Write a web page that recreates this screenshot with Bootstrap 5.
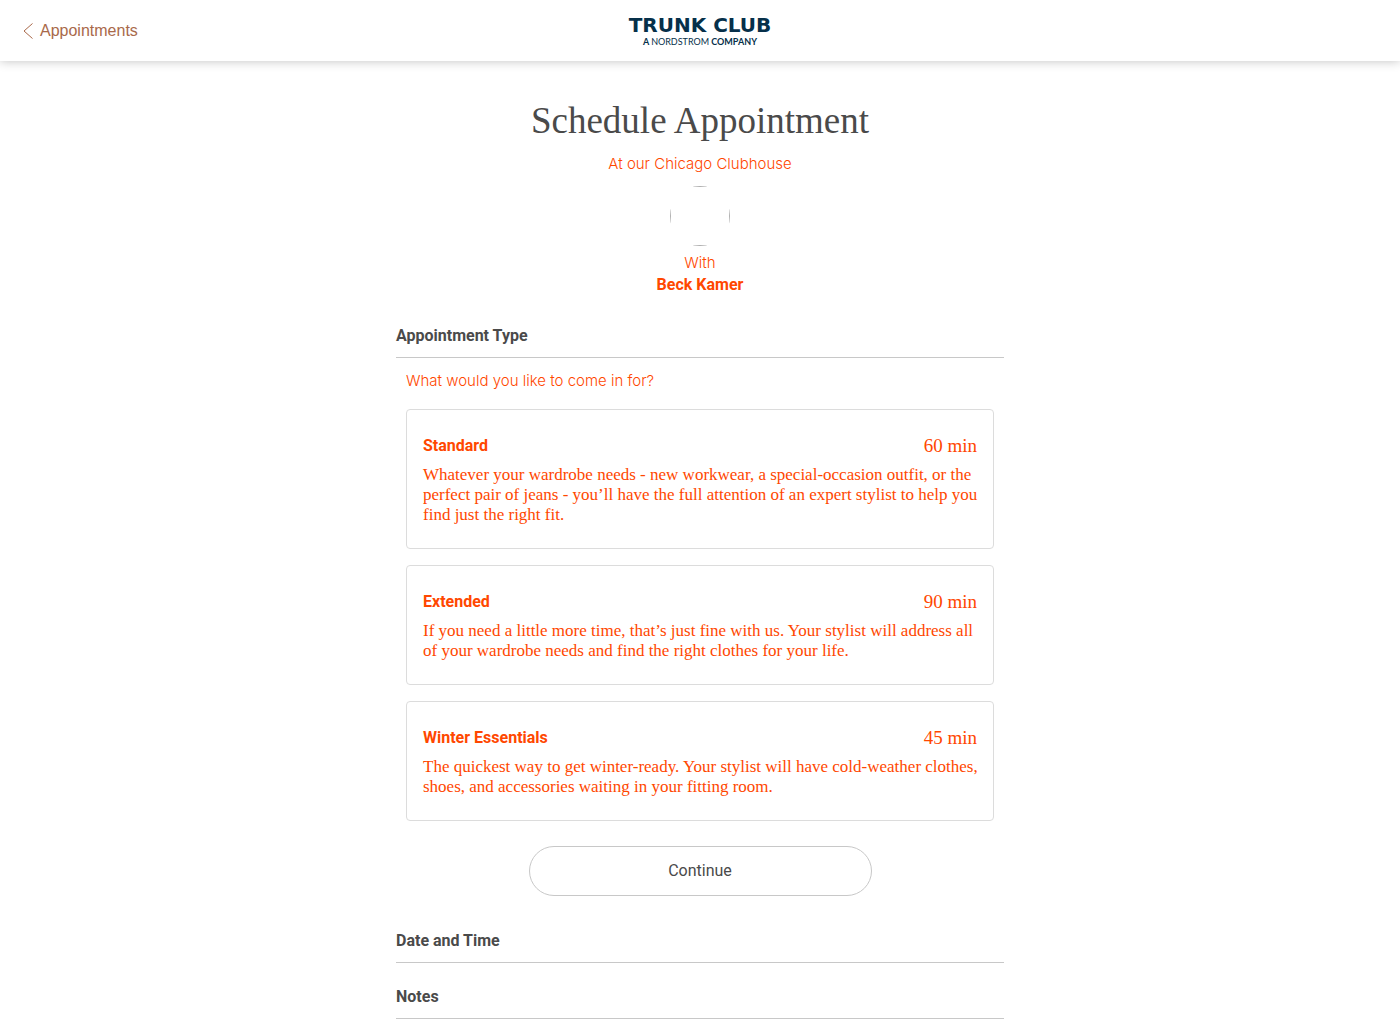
<!DOCTYPE html>
<html lang="en">
<head>
<meta charset="utf-8">
<meta name="viewport" content="width=device-width, initial-scale=1">
<title>Schedule Appointment - Trunk Club</title>
<link href="https://cdn.jsdelivr.net/npm/bootstrap@5.3.0/dist/css/bootstrap.min.css" rel="stylesheet">
<style>
  :root { --tc-orange: #ff4700; --tc-ink: #4a4a4a; --tc-navy: #06304a; --tc-copper: #a9694a; --tc-line: #c8c8c8; }
  body { font-family: Roboto, "Liberation Sans", sans-serif; font-size: 16px; line-height: 22px; color: var(--tc-orange); }
  .topbar { height: 61px; box-shadow: 0 0 10px rgba(0, 0, 0, .25); }
  .back-link { font-family: "Liberation Sans", sans-serif; color: var(--tc-copper); }
  .brand { color: var(--tc-navy); }
  .brand-name { font-family: "DejaVu Sans", sans-serif; font-weight: 700; font-size: 20px; line-height: 22px; }
  .brand-tag { font-family: Lato, sans-serif; font-weight: 700; font-size: 9px; line-height: 12px; }
  .brand-parent { font-weight: 400; }
  .booking { max-width: 608px; }
  .page-title { font-family: "Liberation Serif", serif; font-size: 37px; line-height: 40px; font-weight: 400; color: var(--tc-ink); }
  .soft-text { font-family: Inter, sans-serif; font-weight: 300; font-size: 15px; }
  .avatar { width: 60px; height: 60px; overflow: hidden; margin: 11px auto 6px; }
  .avatar-frame { border: 1px solid #b0b0b0; }
  .step-title { font-size: 16px; line-height: 22px; font-weight: 700; color: var(--tc-ink); border-bottom: 1px solid var(--tc-line); padding-bottom: 10px; margin: 0; }
  .step-first { padding-top: 29px; }
  .step-later { padding-top: 23px; }
  .step-body { padding: 12px 10px 11px; }
  .step-question { margin-bottom: 17px; }
  .option-card { border: 1px solid #dcdcdc; border-radius: 4px; padding: 25px 12px 23px 16px; cursor: pointer; }
  .option-input:checked + .option-card { border-color: var(--tc-orange); }
  .option-length { font-family: "Liberation Serif", serif; font-size: 19px; }
  .option-text { font-family: "Liberation Serif", serif; font-size: 17px; line-height: 20px; }
  .continue-btn { width: 343px; height: 50px; border: 1px solid var(--tc-line); color: var(--tc-ink); font-size: 16px; margin-top: 25px; }
</style>
<script src="https://cdn.jsdelivr.net/npm/bootstrap@5.3.0/dist/js/bootstrap.bundle.min.js"></script>
</head>
<body>
<header class="topbar row g-0 align-items-center bg-white">
  <div class="col ps-4 d-flex">
    <a class="back-link d-flex align-items-center text-decoration-none" href="#">
      <svg class="me-2" width="8" height="16" viewBox="0 0 8 16" overflow="visible" fill="none" stroke="currentColor" aria-hidden="true"><path d="M8.500 .5 0 8l8.500 7.500"/></svg>Appointments
    </a>
  </div>
  <div class="col-auto brand text-center">
    <div class="brand-name">TRUNK CLUB</div>
    <div class="brand-tag">A <span class="brand-parent">NORDSTROM</span> COMPANY</div>
  </div>
  <div class="col pe-4"></div>
</header>

<main class="booking container-fluid px-0 pt-4">
  <div class="text-center pt-3">
    <h1 class="page-title mb-2">Schedule Appointment</h1>
    <p class="soft-text mb-0 pt-1">At our Chicago Clubhouse</p>
    <div class="avatar rounded-circle"><div class="avatar-frame w-100 h-100"></div></div>
    <p class="soft-text mb-0">With</p>
    <p class="fw-bold mb-0">Beck Kamer</p>
  </div>

  <section>
    <h2 class="step-title step-first">Appointment Type</h2>
    <form class="step-body" id="type-form">
      <p class="soft-text step-question">What would you like to come in for?</p>
      <div class="d-flex flex-column gap-3">
        <div>
          <input class="option-input visually-hidden" type="radio" name="type" id="standard">
          <label class="option-card d-block" for="standard">
            <span class="d-flex justify-content-between mb-2 pe-1"><strong>Standard</strong><span class="option-length">60 min</span></span>
            <span class="option-text d-block">Whatever your wardrobe needs - new workwear, a special-occasion outfit, or the perfect pair of jeans - you’ll have the full attention of an expert stylist to help you find just the right fit.</span>
          </label>
        </div>
        <div>
          <input class="option-input visually-hidden" type="radio" name="type" id="extended">
          <label class="option-card d-block" for="extended">
            <span class="d-flex justify-content-between mb-2 pe-1"><strong>Extended</strong><span class="option-length">90 min</span></span>
            <span class="option-text d-block">If you need a little more time, that’s just fine with us. Your stylist will address all of your wardrobe needs and find the right clothes for your life.</span>
          </label>
        </div>
        <div>
          <input class="option-input visually-hidden" type="radio" name="type" id="winter">
          <label class="option-card d-block" for="winter">
            <span class="d-flex justify-content-between mb-2 pe-1"><strong>Winter Essentials</strong><span class="option-length">45 min</span></span>
            <span class="option-text d-block">The quickest way to get winter-ready. Your stylist will have cold-weather clothes, shoes, and accessories waiting in your fitting room.</span>
          </label>
        </div>
      </div>
      <button class="continue-btn btn rounded-pill d-block mx-auto" type="submit">Continue</button>
    </form>
  </section>
  <section>
    <h2 class="step-title step-later">Date and Time</h2>
  </section>
  <section>
    <h2 class="step-title step-later">Notes</h2>
  </section>
</main>
</body>
</html>
